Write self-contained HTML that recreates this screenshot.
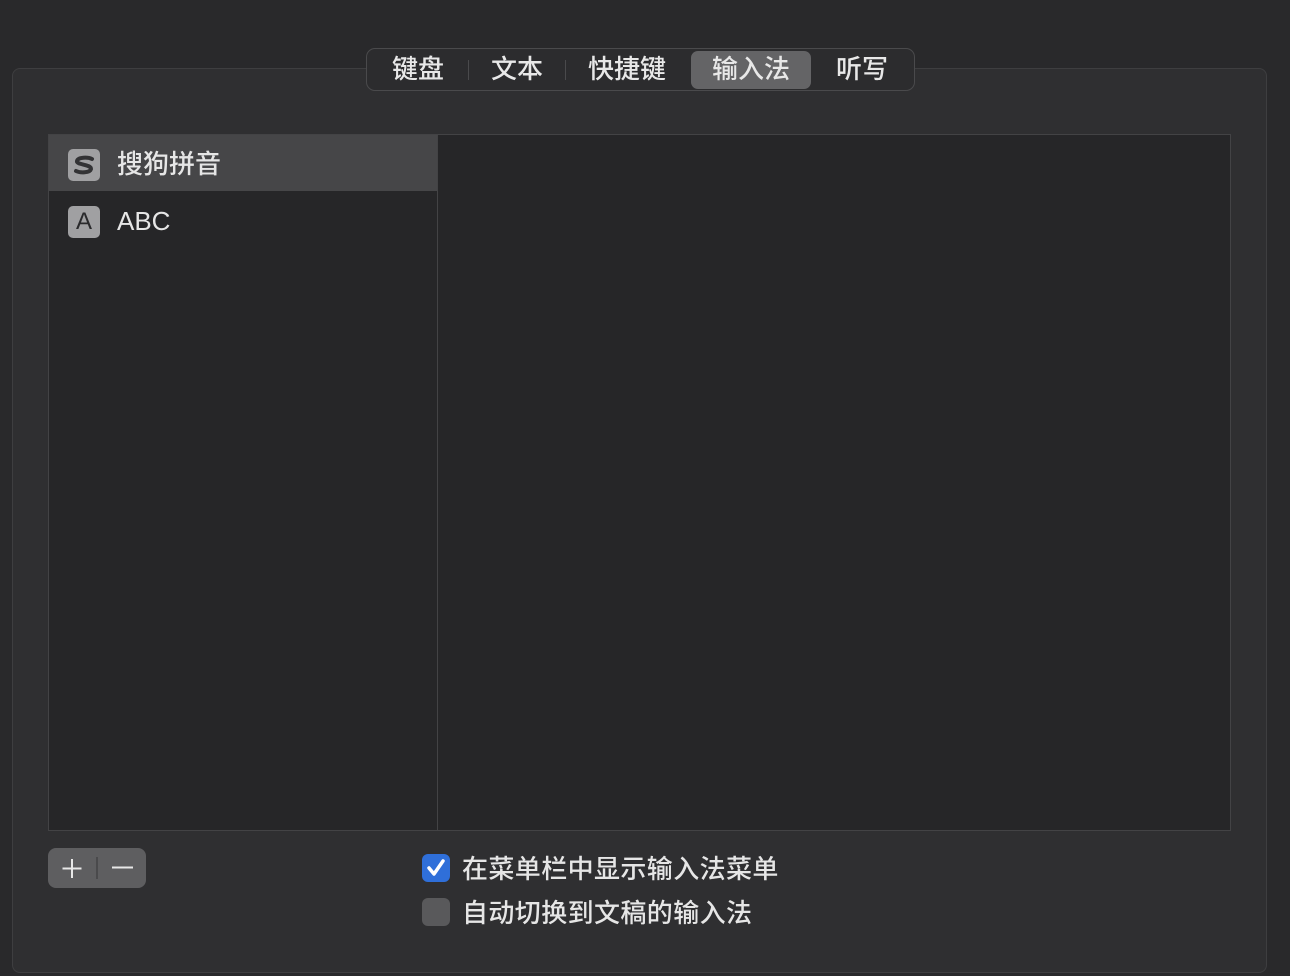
<!DOCTYPE html>
<html><head><meta charset="utf-8"><style>
body{margin:0;width:1290px;height:976px;background:#29292b;position:relative;overflow:hidden;font-family:"Liberation Sans","Noto Sans CJK SC",sans-serif;color:#e6e6e6}
.box{position:absolute;left:12px;top:68px;width:1253px;height:903px;border:1px solid #3e3e40;border-radius:8px;background:#2f2f31}
.tabs{position:absolute;left:366px;top:48px;width:547px;height:41px;border:1px solid #4a4a4c;border-radius:9px;background:#2c2c2e}
.tab{position:absolute;top:0;height:41px;line-height:41px;font-size:26px;font-weight:500;color:#e8e8e8;text-align:center}
.sel{position:absolute;left:324px;top:2px;width:120px;height:38px;background:#646466;border-radius:7px}
.sep{position:absolute;top:11px;width:1px;height:20px;background:#4a4a4c}
.list{position:absolute;left:48px;top:134px;width:1181px;height:695px;border:1px solid #434345;background:#262628}
.left{position:absolute;left:0;top:0;width:388px;height:695px;border-right:1px solid #434345}
.row{position:absolute;left:0;width:388px;height:56px;font-size:26px;font-weight:500}
.ic{position:absolute;left:19px;top:14px;width:32px;height:32px;border-radius:5px;background:#a0a0a2;color:#2a2a2c;text-align:center;line-height:32px;font-size:24px;font-weight:400}
.lbl{position:absolute;left:68px;top:1px;line-height:56px}
.btns{position:absolute;left:48px;top:848px;width:98px;height:40px;border-radius:8px;background:#5e5e60}
.cb{position:absolute;left:422px;width:28px;height:28px;border-radius:6px}
.ct{position:absolute;left:462px;font-size:26px;font-weight:500;letter-spacing:0.4px;line-height:30px}
</style></head><body>
<div class="box"></div>
<div class="tabs">
<div class="sel"></div>
<div class="tab" style="left:6px;width:90px">键盘</div>
<div class="sep" style="left:101px"></div>
<div class="tab" style="left:106px;width:88px">文本</div>
<div class="sep" style="left:198px"></div>
<div class="tab" style="left:210px;width:100px">快捷键</div>
<div class="tab" style="left:324px;width:120px">输入法</div>
<div class="tab" style="left:450px;width:90px">听写</div>
</div>
<div class="list"><div class="left">
<div class="row" style="top:0;background:#464648"><div class="ic"><svg width="32" height="32" viewBox="0 0 32 32"><path d="M24 10 C20 8 10 8 9 12 C8 16 23 15 23 20 C22 24 12 24 8 22" fill="none" stroke="#333335" stroke-width="4" stroke-linecap="round"/></svg></div><div class="lbl">搜狗拼音</div></div>
<div class="row" style="top:57px"><div class="ic">A</div><div class="lbl">ABC</div></div>
</div></div>
<div class="btns"><svg width="98" height="40"><path d="M24 11v19M14.5 20.5h19" stroke="#e8e8e8" stroke-width="2"/><path d="M49 9v22" stroke="#4a4a4c" stroke-width="2"/><path d="M64 19.5h21" stroke="#e8e8e8" stroke-width="2"/></svg></div>
<div class="cb" style="top:854px;background:#2f6fd9"><svg width="28" height="28"><path d="M7 14l5 6 9-13" fill="none" stroke="#fff" stroke-width="3.5" stroke-linecap="round" stroke-linejoin="round"/></svg></div>
<div class="ct" style="top:854px">在菜单栏中显示输入法菜单</div>
<div class="cb" style="top:898px;background:#59595b"></div>
<div class="ct" style="top:898px">自动切换到文稿的输入法</div>
</body></html>
